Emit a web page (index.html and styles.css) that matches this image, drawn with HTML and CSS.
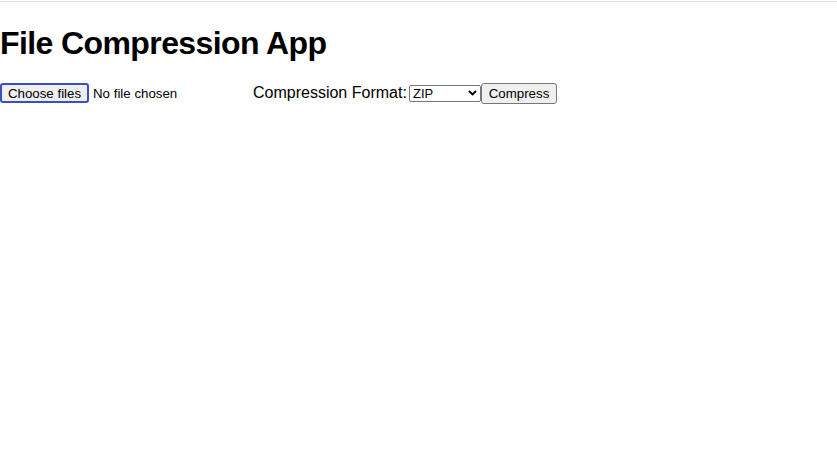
FILE: index.html
```html
<!DOCTYPE html>
<html>
<head>
<meta charset="utf-8">
<link rel="stylesheet" href="styles.css">
</head>
<body>
<div class="topline"></div>
<h1 class="title">File Compression App</h1>
<div class="controls">
  <div class="file">
    <span class="choose">Choose files</span><span class="nofile">No file chosen</span>
  </div>
  <span class="label">Compression Format:</span><span class="format"><span class="format-text">ZIP</span><svg class="chev" width="9" height="6" viewBox="0 0 9 6"><path d="M1 1 L4.5 4.5 L8 1" fill="none" stroke="#000" stroke-width="1.8"/></svg></span><span class="btn">Compress</span>
</div>
</body>
</html>
```
FILE: styles.css
```css
html, body { margin: 0; padding: 0; background: #fff; }
body { font-family: "Liberation Sans", Arial, sans-serif; color: #000; }
.topline { height: 1px; margin-top: 1px; background: #e0e0e0; }
.title { font-family: "Liberation Sans", Arial, sans-serif; font-size: 32px; font-weight: 700; letter-spacing: -0.6px; margin: 20px 0 0 0; line-height: 42px; }
.controls { display: flex; align-items: center; height: 22px; margin-top: 18px; }
.file { display: flex; align-items: center; width: 253px; font-size: 13.3px; }
.choose { box-sizing: border-box; width: 89px; height: 20px; border: 2px solid #3b4ec4; border-radius: 3px; background: #efefef; display: flex; align-items: center; justify-content: center; }
.nofile { margin-left: 4px; }
.label { font-size: 16px; width: 156px; }
.format { box-sizing: border-box; width: 72px; height: 17px; border: 1px solid #767676; border-radius: 2px; background: #fff; font-size: 13px; display: flex; align-items: center; justify-content: space-between; padding: 0 3px 0 3px; }
.chev { display: block; }
.btn { box-sizing: border-box; width: 76px; height: 21px; border: 1px solid #767676; border-radius: 3px; background: #efefef; font-size: 13.3px; display: flex; align-items: center; justify-content: center; }
```
